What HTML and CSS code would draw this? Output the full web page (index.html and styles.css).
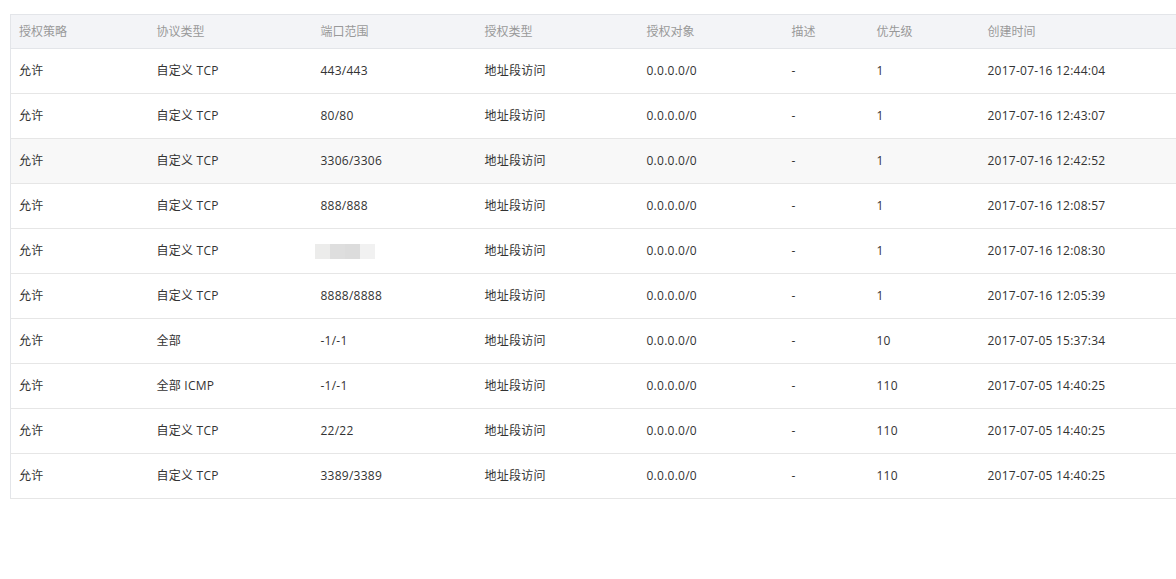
FILE: index.html
```html
<!DOCTYPE html>
<html lang="zh-CN">
<head>
<meta charset="utf-8">
<link rel="stylesheet" href="styles.css">
</head>
<body>
<div class="wrap">
<table class="rules">
  <colgroup>
    <col class="c1"><col class="c2"><col class="c3"><col class="c4"><col class="c5"><col class="c6"><col class="c7"><col class="c8">
  </colgroup>
  <thead>
    <tr><th>授权策略</th><th>协议类型</th><th>端口范围</th><th>授权类型</th><th>授权对象</th><th>描述</th><th>优先级</th><th>创建时间</th></tr>
  </thead>
  <tbody>
    <tr><td>允许</td><td>自定义 TCP</td><td>443/443</td><td>地址段访问</td><td>0.0.0.0/0</td><td>-</td><td>1</td><td>2017-07-16 12:44:04</td></tr>
    <tr><td>允许</td><td>自定义 TCP</td><td>80/80</td><td>地址段访问</td><td>0.0.0.0/0</td><td>-</td><td>1</td><td>2017-07-16 12:43:07</td></tr>
    <tr class="hover"><td>允许</td><td>自定义 TCP</td><td>3306/3306</td><td>地址段访问</td><td>0.0.0.0/0</td><td>-</td><td>1</td><td>2017-07-16 12:42:52</td></tr>
    <tr><td>允许</td><td>自定义 TCP</td><td>888/888</td><td>地址段访问</td><td>0.0.0.0/0</td><td>-</td><td>1</td><td>2017-07-16 12:08:57</td></tr>
    <tr><td>允许</td><td>自定义 TCP</td><td class="blurcell"><span class="blur"><i class="b1"></i><i class="b2"></i><i class="b3"></i><i class="b4"></i></span></td><td>地址段访问</td><td>0.0.0.0/0</td><td>-</td><td>1</td><td>2017-07-16 12:08:30</td></tr>
    <tr><td>允许</td><td>自定义 TCP</td><td>8888/8888</td><td>地址段访问</td><td>0.0.0.0/0</td><td>-</td><td>1</td><td>2017-07-16 12:05:39</td></tr>
    <tr><td>允许</td><td>全部</td><td>-1/-1</td><td>地址段访问</td><td>0.0.0.0/0</td><td>-</td><td>10</td><td>2017-07-05 15:37:34</td></tr>
    <tr><td>允许</td><td>全部 ICMP</td><td>-1/-1</td><td>地址段访问</td><td>0.0.0.0/0</td><td>-</td><td>110</td><td>2017-07-05 14:40:25</td></tr>
    <tr><td>允许</td><td>自定义 TCP</td><td>22/22</td><td>地址段访问</td><td>0.0.0.0/0</td><td>-</td><td>110</td><td>2017-07-05 14:40:25</td></tr>
    <tr><td>允许</td><td>自定义 TCP</td><td>3389/3389</td><td>地址段访问</td><td>0.0.0.0/0</td><td>-</td><td>110</td><td>2017-07-05 14:40:25</td></tr>
  </tbody>
</table>
</div>
</body>
</html>
```
FILE: styles.css
```css
html, body {
  margin: 0;
  padding: 0;
  background: #fff;
}
body {
  font-family: "Open Sans", "Noto Sans CJK SC", sans-serif;
  font-size: 12px;
  color: #333;
  overflow: hidden;
}
.wrap {
  padding: 14px 0 0 10px;
  width: 1200px;
}
.rules {
  border-collapse: collapse;
  table-layout: fixed;
  width: 1190px;
  border: 1px solid #e3e5e9;
}
.c1 { width: 138px; }
.c2 { width: 164px; }
.c3 { width: 164px; }
.c4 { width: 162px; }
.c5 { width: 145px; }
.c6 { width: 85px; }
.c7 { width: 111px; }
.c8 { width: auto; }
.rules th {
  background: #f3f4f7;
  color: #999;
  font-weight: normal;
  text-align: left;
  height: 32px;
  padding: 1px 0 0 8px;
  border-bottom: 1px solid #e3e5e9;
  line-height: 16px;
}
.rules td {
  height: 43px;
  padding: 0 0 1px 8px;
  border-bottom: 1px solid #e6e6e6;
  color: #333;
  line-height: 16px;
  white-space: nowrap;
  letter-spacing: 0.25px;
}
.rules tr.hover td {
  background: #f8f8f8;
}
.blurcell { position: relative; }
.blur {
  display: inline-flex;
  vertical-align: middle;
  margin-left: -6px;
  height: 15px;
}
.blur i { display: block; height: 15px; width: 15px; }
.b1 { background: #ececeb; }
.b2 { background: #dedede; }
.b3 { background: #dcdcdc; }
.b4 { background: #f1f1f1; }
```
